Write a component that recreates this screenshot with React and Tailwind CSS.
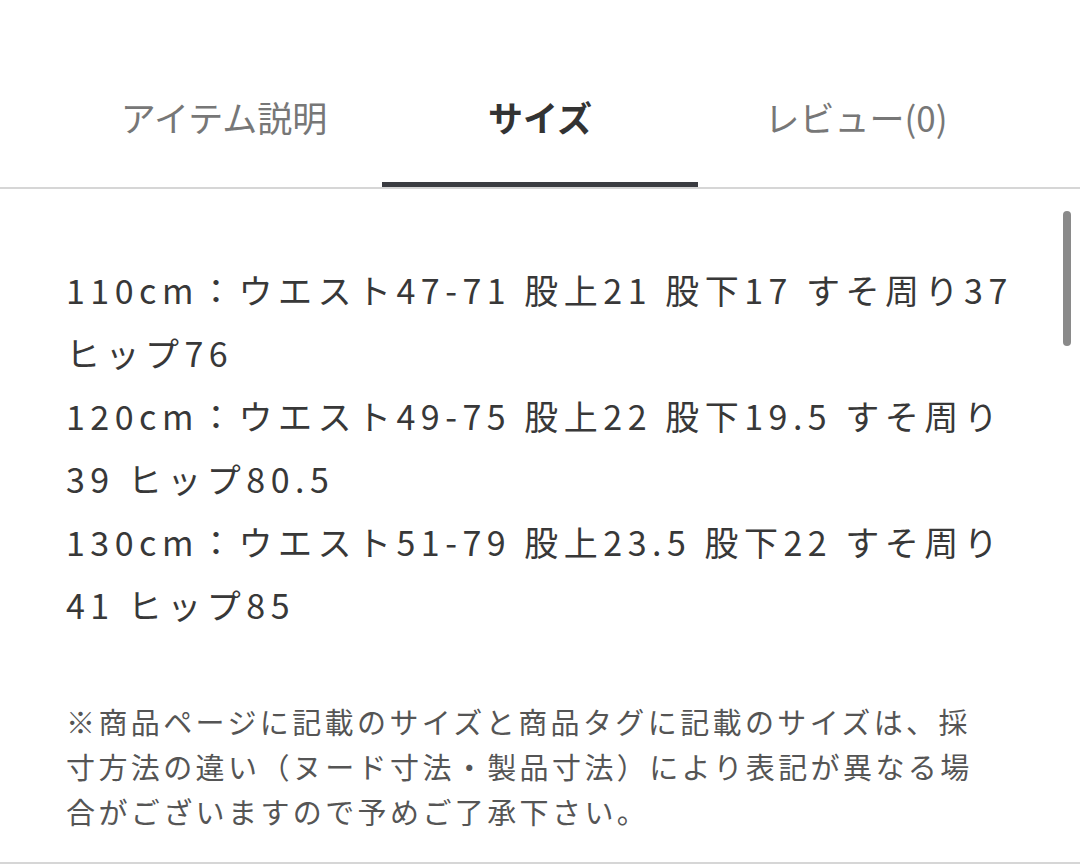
import React from 'react';

const sizeLines = [
  '110cm：ウエスト47-71 股上21 股下17 すそ周り37',
  'ヒップ76',
  '120cm：ウエスト49-75 股上22 股下19.5 すそ周り',
  '39 ヒップ80.5',
  '130cm：ウエスト51-79 股上23.5 股下22 すそ周り',
  '41 ヒップ85',
];

const noteLines = [
  '※商品ページに記載のサイズと商品タグに記載のサイズは、採',
  '寸方法の違い（ヌード寸法・製品寸法）により表記が異なる場',
  '合がございますので予めご了承下さい。',
];

const tabs = ['アイテム説明', 'サイズ', 'レビュー(0)'];

export default function App() {
  return (
    <div
      className="relative w-[1080px] h-[864px] bg-white overflow-hidden"
      style={{ fontFamily: '"Noto Sans CJK JP", "Noto Sans", sans-serif' }}
    >
      {/* Tabs */}
      <div className="border-b-2 border-[#d6d6d6] px-[66px] pt-[92px]">
        <div className="grid grid-cols-3">
          {tabs.map((t, i) => (
            <div
              key={t}
              className={`flex items-center justify-center h-[50px] mb-[40px] text-[35px] leading-[50px] ${
                i === 1 ? 'font-bold text-[#333]' : 'text-[#777]'
              }`}
            >
              {t}
            </div>
          ))}
        </div>
        <div className="grid grid-cols-3">
          <div />
          <div className="h-[5px] bg-[#3a3c41]" />
          <div />
        </div>
      </div>

      {/* Content */}
      <div className="px-[66px] pt-[69px]">
        <div className="text-[34px] leading-[63px] tracking-[5.5px] text-[#383838]">
          {sizeLines.map((l) => (
            <div key={l} className="whitespace-nowrap">
              {l}
            </div>
          ))}
        </div>
        <div className="mt-[63px] text-[29px] leading-[45px] tracking-[3.4px] text-[#555]">
          {noteLines.map((l) => (
            <div key={l} className="whitespace-nowrap">
              {l}
            </div>
          ))}
        </div>
      </div>

      <div className="absolute left-0 right-0 top-[862px] h-[2px] bg-[#d6d6d6]" />

      {/* Scrollbar */}
      <div className="absolute left-[1063px] top-[211px] w-[8px] h-[135px] rounded-full bg-[#8a8a8a]" />
    </div>
  );
}
